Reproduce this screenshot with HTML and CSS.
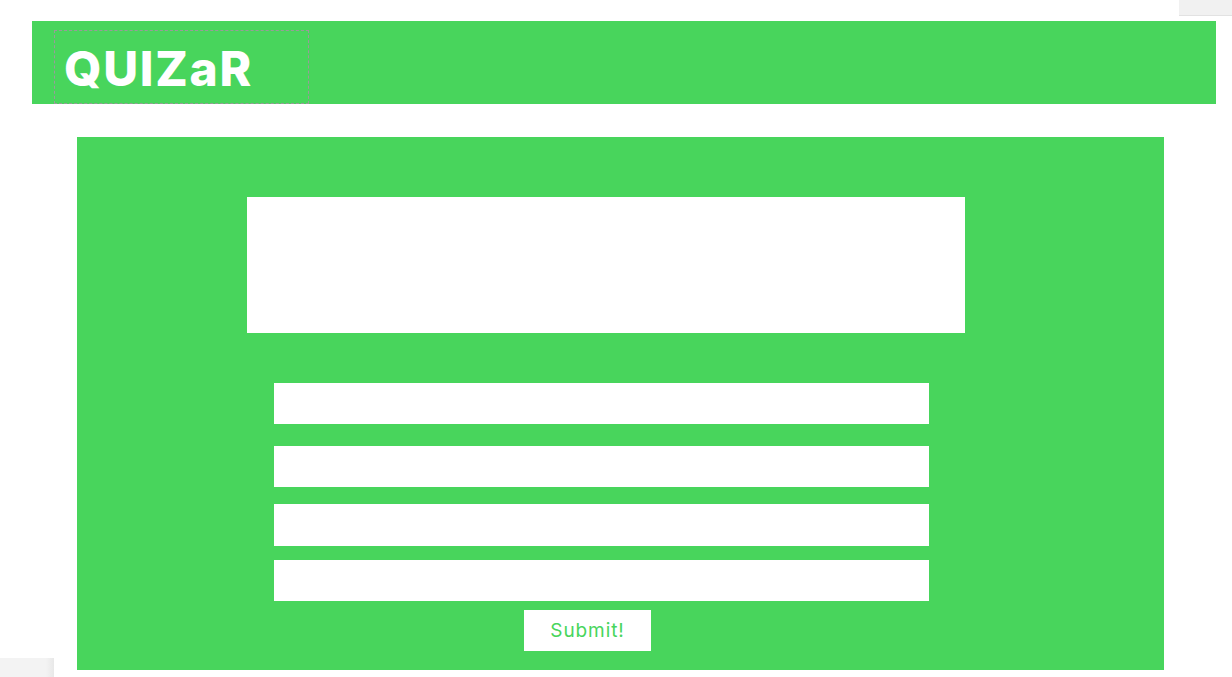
FILE: index.html
```html
<!DOCTYPE html>
<html>
<head>
<meta charset="utf-8">
<link rel="stylesheet" href="styles.css">
</head>
<body>
<div class="corner-top"></div>
<header class="header">
  <div class="logo">QUIZaR</div>
</header>
<main class="quiz">
  <div class="question"></div>
  <form class="answers">
    <input class="answer a1" type="text">
    <input class="answer a2" type="text">
    <input class="answer a3" type="text">
    <input class="answer a4" type="text">
    <button class="submit" type="button">Submit!</button>
  </form>
</main>
<div class="corner-bottom"></div>
</body>
</html>
```
FILE: styles.css
```css
html, body { margin: 0; padding: 0; background: #fff; }
body { width: 1232px; height: 677px; overflow: hidden; position: relative; font-family: "Inter", "Liberation Sans", Arial, sans-serif; }
.header { margin: 21px 16px 0 32px; height: 83px; background: #48d55c; display: flex; align-items: flex-end; }
.logo { margin-left: 22px; width: 255px; height: 74px; box-sizing: border-box; border: 1px dashed #9a9a9a; color: #fff; font-weight: 800; font-size: 48px; letter-spacing: 1.7px; line-height: 1; padding: 14px 0 0 9px; }
.quiz { margin: 33px 68px 0 77px; height: 533px; background: #48d55c; padding-top: 60px; box-sizing: border-box; }
.question { margin-left: 170px; width: 718px; height: 136px; background: #fff; }
.answers { display: flex; flex-direction: column; align-items: flex-start; margin: 0; }
.answer { display: block; margin: 0 0 0 197px; width: 655px; height: 41px; border: 0; padding: 0; background: #fff; outline: none; }
.a1 { margin-top: 50px; }
.a2 { margin-top: 22px; }
.a3 { margin-top: 17px; height: 42px; }
.a4 { margin-top: 14px; }
.submit { margin: 9px 0 0 447px; width: 127px; height: 41px; border: 0; background: #fff; color: #48d55c; font-family: "Inter", "Liberation Sans", sans-serif; font-size: 19px; letter-spacing: 0.9px; padding: 0; }
.corner-top { position: absolute; top: 0; right: 0; width: 53px; height: 15px; background: #f1f1f1; border-bottom: 1px solid #e2e2e2; }
.corner-bottom { position: absolute; bottom: 0; left: 0; width: 54px; height: 19px; background: linear-gradient(to right, #f3f3f3 85%, #e8e8e8); }
```
